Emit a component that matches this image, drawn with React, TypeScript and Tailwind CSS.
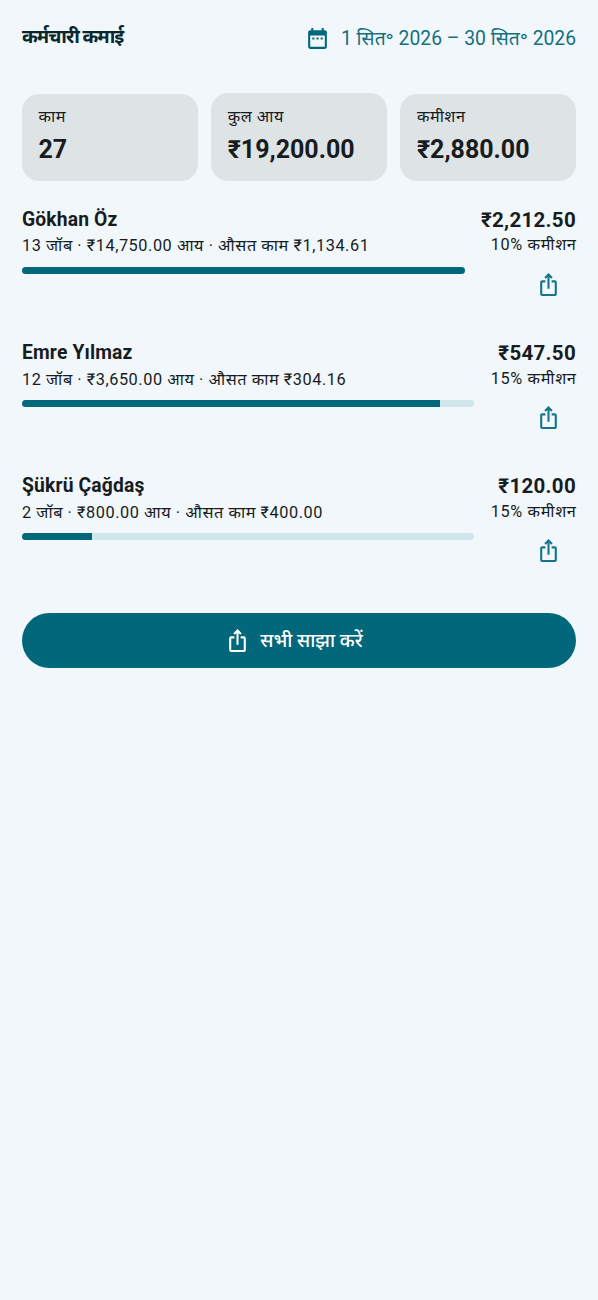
import { MdDateRange, MdIosShare } from "react-icons/md";

const stats = [
  { label: "काम", value: "27", card: "h-[87px]" },
  { label: "कुल आय", value: "₹19,200.00", card: "h-[88px]" },
  { label: "कमीशन", value: "₹2,880.00", card: "h-[87px]" },
];

const employees = [
  {
    name: "Gökhan Öz",
    detail: "13 जॉब · ₹14,750.00 आय · औसत काम ₹1,134.61",
    amount: "₹2,212.50",
    rate: "10% कमीशन",
    progress: 100,
  },
  {
    name: "Emre Yılmaz",
    detail: "12 जॉब · ₹3,650.00 आय · औसत काम ₹304.16",
    amount: "₹547.50",
    rate: "15% कमीशन",
    progress: 92.4,
  },
  {
    name: "Şükrü Çağdaş",
    detail: "2 जॉब · ₹800.00 आय · औसत काम ₹400.00",
    amount: "₹120.00",
    rate: "15% कमीशन",
    progress: 15.4,
  },
];

export default function App() {
  return (
    <main className="min-h-[1300px] w-full bg-[#f1f7fa] px-[22px] font-['Roboto','Noto_Sans','Noto_Sans_Devanagari',sans-serif] text-[#171c1e]">
      <header className="flex h-[76px] items-center justify-between">
        <h1 className="pb-[2px] text-[19px] leading-6 font-bold tracking-[-1px] text-[#0b272e]">कर्मचारी कमाई</h1>
        <button className="flex items-center gap-[11px] text-[19.3px] leading-6 text-[#13707f]">
          <MdDateRange size={25} className="text-[#00687a]" />
          <span className="pt-[2px]">1 सित॰ 2026 – 30 सित॰ 2026</span>
        </button>
      </header>

      <section className="mt-[17px] grid h-[88px] grid-cols-3 items-start gap-[13.6px]">
        {stats.map((s) => (
          <div key={s.label} className={`flex flex-col justify-center rounded-[17px] bg-[#dee3e5] px-[16.5px] pb-[2px] ${s.card} ${s.card === "h-[87px]" ? "mt-[0.5px]" : ""}`}>
            <div className="text-[16.3px] leading-[22px] tracking-[0.5px]">{s.label}</div>
            <div className="mt-[6px] text-[25px] leading-[32px] font-bold">{s.value}</div>
          </div>
        ))}
      </section>

      <section className="mt-[25px]">
        {employees.map((e) => (
          <article key={e.name} className="flex h-[133.2px] justify-between">
            <div className="w-[452px]">
              <h2 className="text-[19.3px] leading-[27.4px] font-bold tracking-[0.15px]">{e.name}</h2>
              <p className="text-[16.3px] leading-[26.6px] tracking-[0.56px] whitespace-nowrap">{e.detail}</p>
              <div className={`mt-[6.6px] h-[7px] overflow-hidden rounded-full bg-[#cfe6ec] ${e.progress === 100 ? "w-[443px]" : "w-full"}`}>
                <div className="h-full bg-[#00687a]" style={{ width: `${e.progress}%` }} />
              </div>
            </div>
            <div className="flex flex-col items-end whitespace-nowrap">
              <div className="text-[20.5px] leading-[28.4px] font-bold tracking-[0.3px]">{e.amount}</div>
              <div className="mr-[-0.5px] text-[16.3px] leading-[22px] tracking-[0.6px]">{e.rate}</div>
              <button aria-label="साझा करें" className="mt-[15.1px] mr-[14.6px]">
                <MdIosShare size={25} className="text-[#13748a]" />
              </button>
            </div>
          </article>
        ))}
      </section>

      <button className="mt-[7.4px] flex h-[54.6px] w-full items-center justify-center gap-[10.5px] rounded-full bg-[#00687a] pr-[10.5px] text-[19px] font-medium text-white">
        <MdIosShare size={25} />
        <span className="pt-[2px]">सभी साझा करें</span>
      </button>
    </main>
  );
}
